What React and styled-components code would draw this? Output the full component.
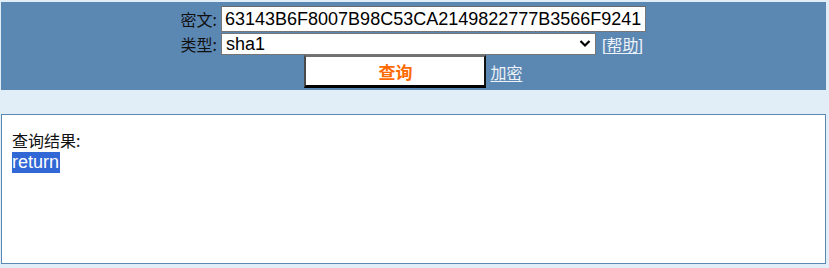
import React from "react";
import styled, { createGlobalStyle } from "styled-components";

const GlobalStyle = createGlobalStyle`
  html, body {
    margin: 0;
    padding: 0;
    background: #e1edf7;
  }
  body {
    font-family: "Liberation Sans", Arial, "Noto Sans CJK SC", sans-serif;
    color: #111;
  }
`;

const Page = styled.div`
  width: 825px;
  padding: 2px 0 4px 1px;
`;

const Panel = styled.form`
  background: #5b87b3;
  height: 88px;
  box-sizing: border-box;
  padding-top: 4px;
  display: flex;
  flex-direction: column;
  align-items: center;
`;

const FieldGrid = styled.div`
  display: grid;
  grid-template-columns: 50px 425px;
  column-gap: 4px;
  row-gap: 1px;
  align-items: center;
  margin-left: -14px;
`;

const Label = styled.label`
  font-family: "Noto Sans CJK SC", sans-serif;
  font-size: 16px;
  line-height: 20px;
  text-align: right;
  white-space: nowrap;
`;

const TextField = styled.input`
  box-sizing: border-box;
  width: 425px;
  height: 26px;
  border: 1px solid #767676;
  border-top-color: #6a6a6a;
  padding: 0 3px;
  font-family: "Liberation Sans", Arial, sans-serif;
  font-size: 18px;
  color: #000;
  background: #fff;
  outline: none;
`;

const SelectRow = styled.div`
  display: flex;
  align-items: center;
  gap: 6px;
`;

const SelectWrap = styled.div`
  position: relative;
  width: 375px;
  height: 22px;
`;

const Select = styled.select`
  appearance: none;
  box-sizing: border-box;
  width: 100%;
  height: 100%;
  border: 1px solid #767676;
  border-radius: 0;
  padding: 0 4px;
  font-family: "Liberation Sans", Arial, sans-serif;
  font-size: 18px;
  color: #000;
  background: #fff;
  outline: none;
`;

const Chevron = styled.svg`
  position: absolute;
  right: 5px;
  top: 6px;
  pointer-events: none;
`;

const Link = styled.a`
  color: #eef3f9;
  font-family: "Noto Sans CJK SC", sans-serif;
  font-size: 16px;
  line-height: 20px;
  text-decoration: underline;
  text-underline-offset: 2px;
  white-space: nowrap;
`;

const Bracketed = styled.span`
  color: #eef3f9;
  font-size: 16px;
  white-space: nowrap;
`;

const ActionRow = styled.div`
  display: flex;
  align-items: center;
  gap: 4px;
`;

const SubmitButton = styled.button`
  box-sizing: border-box;
  width: 182px;
  height: 33px;
  background: #fff;
  border-style: solid;
  border-width: 2px 2px 3px 2px;
  border-color: #707070 #111 #000 #4a4a4a;
  color: #ff6a00;
  font-family: "Noto Sans CJK SC", sans-serif;
  font-weight: 700;
  font-size: 17px;
  cursor: pointer;
`;

const ResultBox = styled.div`
  margin-top: 24px;
  height: 150px;
  box-sizing: border-box;
  background: #fff;
  border: 1px solid #5b87b3;
  padding: 13px 10px;
`;

const ResultTitle = styled.div`
  font-family: "Noto Sans CJK SC", sans-serif;
  font-size: 16px;
  line-height: 24px;
`;

const Highlighted = styled.span`
  display: inline-block;
  background: #3168d5;
  color: #fff;
  font-size: 18px;
  line-height: 21px;
  padding-right: 1px;
`;

export default function App() {
  return (
    <>
      <GlobalStyle />
      <Page>
        <Panel onSubmit={(e) => e.preventDefault()}>
          <FieldGrid>
            <Label htmlFor="cipher">密文:</Label>
            <TextField
              id="cipher"
              defaultValue="63143B6F8007B98C53CA2149822777B3566F9241"
            />
            <Label htmlFor="type">类型:</Label>
            <SelectRow>
              <SelectWrap>
                <Select id="type" defaultValue="sha1">
                  <option value="auto">自动</option>
                  <option value="md5">md5</option>
                  <option value="sha1">sha1</option>
                  <option value="sha256">sha256</option>
                </Select>
                <Chevron width="12" height="9" viewBox="0 0 12 9">
                  <path
                    d="M1.5 2 L6 6.5 L10.5 2"
                    fill="none"
                    stroke="#000"
                    strokeWidth="2.2"
                  />
                </Chevron>
              </SelectWrap>
              <Bracketed>
                [<Link href="#">帮助</Link>]
              </Bracketed>
            </SelectRow>
          </FieldGrid>
          <ActionRow>
            <SubmitButton type="submit">查询</SubmitButton>
            <Link href="#">加密</Link>
          </ActionRow>
        </Panel>
        <ResultBox>
          <ResultTitle>查询结果:</ResultTitle>
          <Highlighted>return</Highlighted>
        </ResultBox>
      </Page>
    </>
  );
}
